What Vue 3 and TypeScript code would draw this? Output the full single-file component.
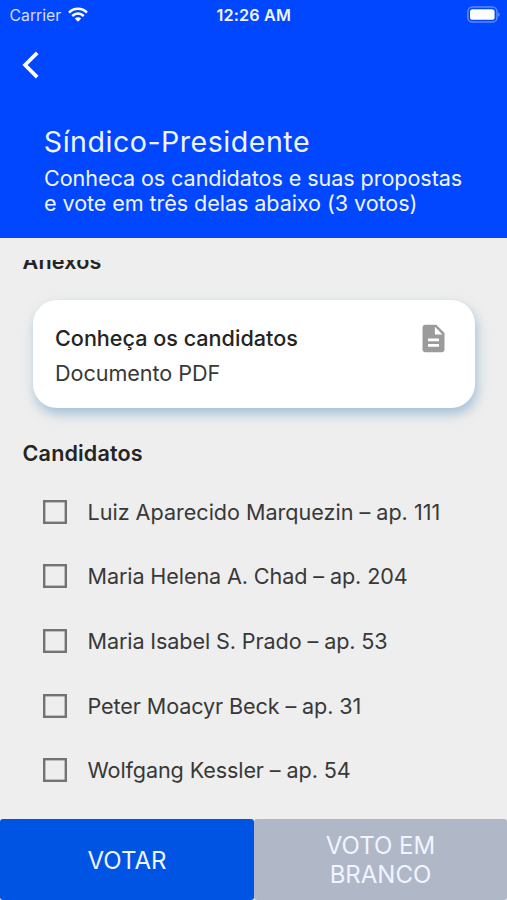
<script setup lang="ts">
import { ref } from 'vue'

interface Candidate {
  id: number
  name: string
  unit: string
}

const candidates: Candidate[] = [
  { id: 1, name: 'Luiz Aparecido Marquezin', unit: '111' },
  { id: 2, name: 'Maria Helena A. Chad', unit: '204' },
  { id: 3, name: 'Maria Isabel S. Prado', unit: '53' },
  { id: 4, name: 'Peter Moacyr Beck', unit: '31' },
  { id: 5, name: 'Wolfgang Kessler', unit: '54' },
]

const maxVotes = 3
const selected = ref<number[]>([])

function toggle(id: number): void {
  if (selected.value.includes(id)) {
    selected.value = selected.value.filter((s) => s !== id)
  } else if (selected.value.length < maxVotes) {
    selected.value = [...selected.value, id]
  }
}
</script>

<template>
  <div class="screen">
    <header class="header">
      <div class="status">
        <div class="carrier">
          <span>Carrier</span>
          <svg class="wifi" width="20" height="16" viewBox="0 0 20 16">
            <g fill="none" stroke="#fff" stroke-width="2.5">
              <path d="M1 5.6C6.2 .6 13.8 .6 19 5.6" />
              <path d="M4.2 9C7.7 5.8 12.3 5.8 15.8 9" />
            </g>
            <path d="M6.8 11.6C8.7 9.9 11.3 9.9 13.2 11.6L10 14.8Z" fill="#fff" />
          </svg>
        </div>
        <span class="time">12:26 AM</span>
        <svg class="battery" width="33" height="17" viewBox="0 0 33 17">
          <rect x=".9" y=".9" width="29" height="15.200" rx="4.6" fill="none" stroke="#fff" stroke-opacity=".36" stroke-width="1.5" />
          <rect x="3" y="3.200" width="24.600" height="10.600" rx="2.600" fill="#fff" />
          <path d="M31.2 6.2C33 7 33 10 31.2 10.8Z" fill="#fff" fill-opacity=".45" />
        </svg>
      </div>
      <button class="back" aria-label="Voltar">
        <svg width="18" height="28" viewBox="0 0 18 28">
          <path d="M15.200 1.900L3.100 14L15.200 26.100" fill="none" stroke="#fff" stroke-width="3.700" />
        </svg>
      </button>
      <h1 class="title">Síndico-Presidente</h1>
      <p class="subtitle">Conheca os candidatos e suas propostas<br />e vote em três delas abaixo (3 votos)</p>
    </header>

    <main class="content">
      <div class="scroller">
        <h2 class="section attachments">Anexos</h2>
        <article class="card">
          <div>
            <p class="card-title">Conheça os candidatos</p>
            <p class="card-type">Documento PDF</p>
          </div>
          <svg class="doc" width="33" height="33" viewBox="0 0 24 24">
            <path
              fill="#9b9b9b"
              d="M14 2H6c-1.1 0-1.99.9-1.99 2L4 20c0 1.1.89 2 1.99 2H18c1.1 0 2-.9 2-2V8l-6-6zm2 16H8v-2h8v2zm0-4H8v-2h8v2zm-3-5V3.500L18.500 9H13z"
            />
          </svg>
        </article>
        <h2 class="section">Candidatos</h2>
        <ul class="list">
          <li v-for="c in candidates" :key="c.id" class="row" @click="toggle(c.id)">
            <svg class="box" width="24" height="24" viewBox="0 0 24 24">
              <rect
                x="1.200"
                y="1.200"
                width="21.600"
                height="21.600"
                stroke="#737373"
                stroke-width="2.400"
                :fill="selected.includes(c.id) ? '#0054e4' : 'none'"
              />
            </svg>
            <span class="name">{{ c.name }} – ap. {{ c.unit }}</span>
          </li>
        </ul>
      </div>
    </main>

    <footer class="actions">
      <button class="action vote">VOTAR</button>
      <button class="action blank">VOTO EM<br />BRANCO</button>
    </footer>
  </div>
</template>

<style>
body {
  margin: 0;
  background: #eee;
}
</style>

<style scoped>
.screen {
  display: flex;
  flex-direction: column;
  height: 900px;
  overflow: hidden;
  background: #eee;
  color: #242424;
  font-family: Inter, 'Liberation Sans', sans-serif;
}
h1,
h2,
p,
ul {
  margin: 0;
  padding: 0;
}
button {
  border: 0;
  margin: 0;
  font-family: inherit;
}
.header {
  box-sizing: border-box;
  flex: none;
  height: 238.400px;
  background: #0047ff;
  color: #f0f4ff;
}
.status {
  display: grid;
  grid-template-columns: 1fr auto 1fr;
  align-items: center;
  height: 30px;
  padding: 0 7px 0 9.500px;
}
.carrier {
  display: flex;
  align-items: center;
  gap: 7px;
  font-size: 15.800px;
  color: #d3dfff;
}
.time {
  margin-left: -2px;
  font-size: 16.200px;
  font-weight: 600;
  letter-spacing: 0.150px;
}
.battery {
  justify-self: end;
  margin-top: -2px;
}
.back {
  display: block;
  margin: 21px 0 0 22px;
  padding: 0;
  height: 28px;
  background: none;
}
.back svg {
  display: block;
}
.title {
  margin: 45px 0 0 43.800px;
  font-size: 28.600px;
  font-weight: 400;
  line-height: 36px;
  letter-spacing: 0.500px;
}
.subtitle {
  margin: 5.700px 0 0 44px;
  font-size: 21.600px;
  line-height: 25.700px;
  letter-spacing: -0.080px;
}
.content {
  flex: 1;
  min-height: 0;
  padding-top: 21.600px;
}
.scroller {
  height: 100%;
  overflow: hidden;
}
.section {
  margin-left: 22.600px;
  font-size: 21.600px;
  font-weight: 600;
  line-height: 26px;
  letter-spacing: 0.120px;
}
.attachments {
  margin-top: -11.500px;
}
.card {
  box-sizing: border-box;
  display: flex;
  justify-content: space-between;
  align-items: flex-start;
  height: 107.500px;
  margin: 25.700px 32px 0 33px;
  padding: 21.500px 25.500px 0 22px;
  border-radius: 24px;
  background: #fff;
  box-shadow: 2px 6px 12px rgba(60, 130, 180, 0.420);
}
.card-title {
  font-size: 21.600px;
  font-weight: 500;
  line-height: 32px;
}
.card-type {
  margin-top: 3.500px;
  font-size: 21.600px;
  line-height: 32px;
  letter-spacing: -0.050px;
  color: #383838;
}
.card + .section {
  margin-top: 32.300px;
}
.list {
  list-style: none;
  margin-top: 13.200px;
}
.row {
  display: flex;
  align-items: center;
  gap: 20.500px;
  height: 64.700px;
  padding-left: 43px;
}
.name {
  font-size: 21.600px;
  letter-spacing: -0.110px;
  color: #383838;
}
.row:first-child .name {
  letter-spacing: -0.020px;
}
.actions {
  display: grid;
  grid-template-columns: 254px 253px;
  flex: none;
  height: 81px;
}
.action {
  padding: 2px 0 0;
  border-radius: 3px;
  font-size: 24px;
  line-height: 28.300px;
  color: #f0f5ff;
}
.vote {
  padding-top: 3px;
  background: #0054e4;
}
.blank {
  background: #b0b7c7;
}
</style>
